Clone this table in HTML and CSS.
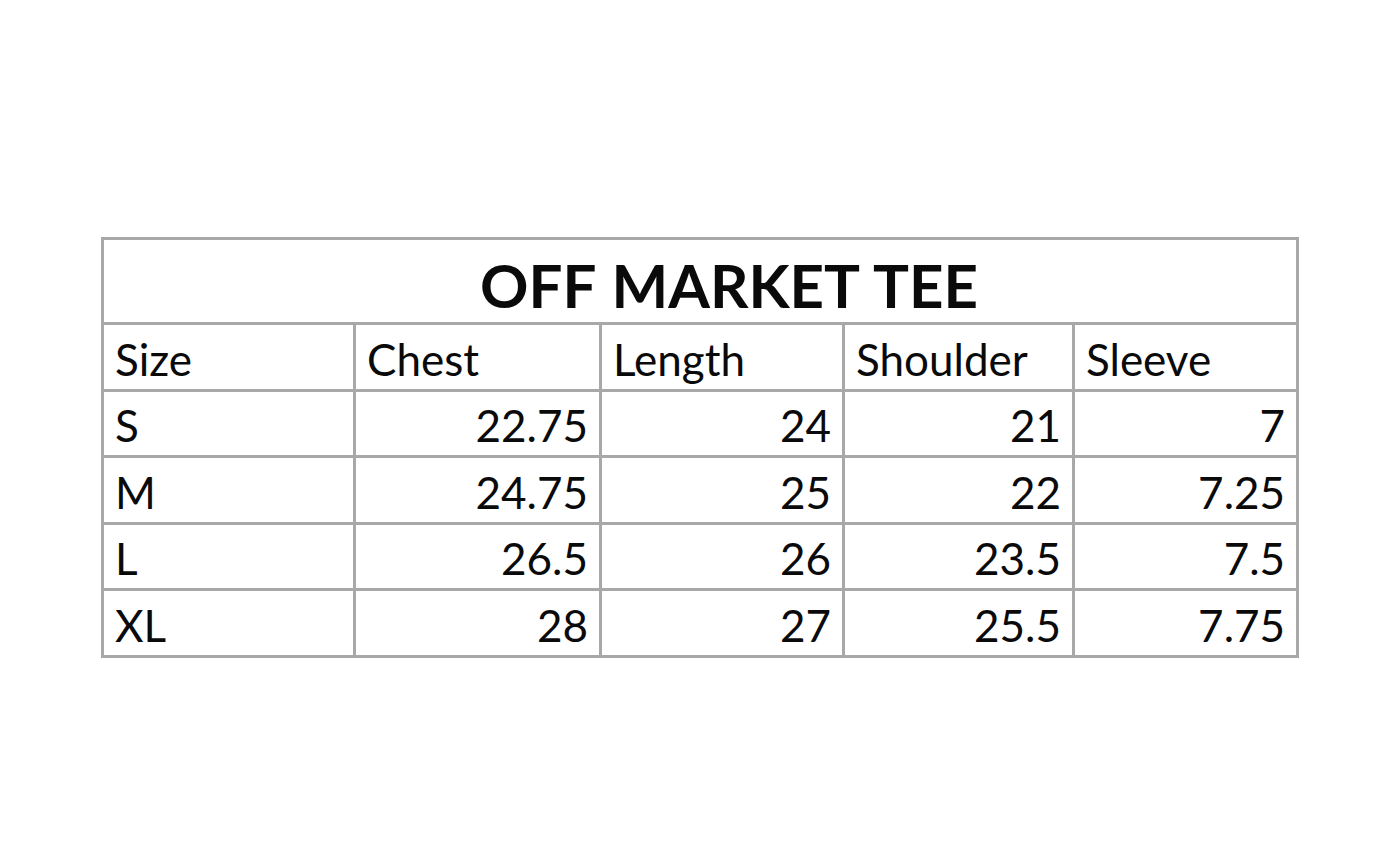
FILE: index.html
```html
<!DOCTYPE html>
<html>
<head>
<meta charset="utf-8">
<link rel="stylesheet" href="styles.css">
</head>
<body>
<table class="size-chart">
  <colgroup>
    <col class="c1"><col class="c2"><col class="c3"><col class="c4"><col class="c5">
  </colgroup>
  <tr class="title-row"><td colspan="5" class="title">OFF MARKET TEE</td></tr>
  <tr class="head-row"><td>Size</td><td>Chest</td><td>Length</td><td>Shoulder</td><td>Sleeve</td></tr>
  <tr class="r66"><td>S</td><td class="num">22.75</td><td class="num">24</td><td class="num">21</td><td class="num">7</td></tr>
  <tr class="r67"><td>M</td><td class="num">24.75</td><td class="num">25</td><td class="num">22</td><td class="num">7.25</td></tr>
  <tr class="r66"><td>L</td><td class="num">26.5</td><td class="num">26</td><td class="num">23.5</td><td class="num">7.5</td></tr>
  <tr class="r67"><td>XL</td><td class="num">28</td><td class="num">27</td><td class="num">25.5</td><td class="num">7.75</td></tr>
</table>
</body>
</html>
```
FILE: styles.css
```css
html, body {
  margin: 0;
  padding: 0;
  background: #ffffff;
}
body {
  width: 1395px;
  height: 844px;
  overflow: hidden;
}
.size-chart {
  margin: 237px 0 0 101px;
  border-collapse: collapse;
  table-layout: fixed;
  width: 1195px;
  font-family: Lato, "Liberation Sans", sans-serif;
  font-size: 44px;
  color: #0a0a0a;
  border: 3px solid #a8a8a8;
}
.c1 { width: 252px; }
.c2 { width: 246px; }
.c3 { width: 243px; }
.c4 { width: 230px; }
.c5 { width: 224px; }
.size-chart td {
  border: 3px solid #a8a8a8;
  padding: 0 11px 8px 11px;
  vertical-align: bottom;
  line-height: 1;
  white-space: nowrap;
}
.size-chart td.num {
  text-align: right;
}
.title-row { height: 85px; }
.head-row { height: 67px; }
.r66 { height: 66px; }
.r67 { height: 67px; }
.size-chart td.title {
  text-align: center;
  font-size: 60px;
  font-weight: 700;
  word-spacing: 2px;
  padding-bottom: 7px;
  padding-left: 58px;
  padding-right: 0;
}
```
